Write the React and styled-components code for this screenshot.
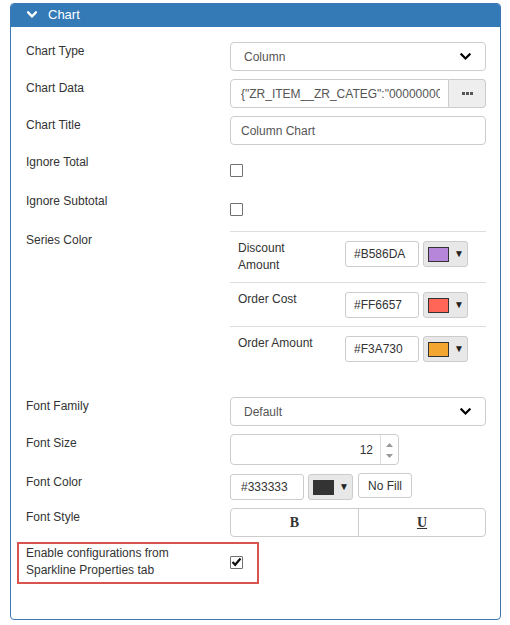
import React from 'react';
import styled, { createGlobalStyle } from 'styled-components';

const Global = createGlobalStyle`
  html, body { margin: 0; padding: 0; background: #fff; }
  body { font-family: "Liberation Sans", Arial, sans-serif; font-size: 12px; color: #333; }
  * { box-sizing: border-box; }
`;

const Page = styled.div`
  padding: 3px 9px 6px 10px;
`;

const Panel = styled.section`
  border: 1px solid #3b78b4;
  border-radius: 4px;
  overflow: hidden;
`;

const Header = styled.div`
  height: 23px;
  background: #337ab7;
  color: #fff;
  display: flex;
  align-items: center;
  gap: 11px;
  padding-left: 16px;
  padding-bottom: 2px;
  font-size: 13px;
`;

const Body = styled.div`
  padding: 15px 14px 35px 15px;
`;

const Row = styled.div`
  display: grid;
  grid-template-columns: 204px minmax(0, 1fr);
  margin-bottom: ${p => (p.$mb !== undefined ? p.$mb : 8)}px;
`;

const Label = styled.div`
  line-height: 16px;
  padding-top: 1px;
  color: #333;
`;

const Select = styled.div`
  height: 29px;
  border: 1px solid #ccc;
  border-radius: 4px;
  display: flex;
  align-items: center;
  justify-content: space-between;
  padding: 0 14px 0 13px;
  color: #555;
  background: #fff;
`;

const InputGroup = styled.div`
  display: flex;
  height: 29px;
  min-width: 0;
`;

const TextBox = styled.div`
  flex: 1;
  min-width: 0;
  height: ${p => p.$h || 29}px;
  border: 1px solid #ccc;
  border-radius: ${p => (p.$joined ? '4px 0 0 4px' : '4px')};
  display: flex;
  align-items: center;
  padding: 0 8px 0 10px;
  color: #555;
  background: #fff;
`;

const Clip = styled.div`
  flex: 1;
  min-width: 0;
  overflow: hidden;
  white-space: nowrap;
`;

const AddonButton = styled.div`
  flex: 0 0 37px;
  border: 1px solid #ccc;
  border-left: none;
  border-radius: 0 4px 4px 0;
  background: #eee;
  display: flex;
  align-items: center;
  justify-content: center;
`;

const CheckCell = styled.div`
  height: 31px;
  padding-top: 11px;
`;

const Checkbox = styled.div`
  width: 13px;
  height: 13px;
  border: 1px solid #707070;
  border-radius: 1px;
  background: #fff;
  display: flex;
  align-items: center;
  justify-content: center;
`;

const SeriesTable = styled.div`
  margin-bottom: 19px;
`;

const SeriesRow = styled.div`
  display: grid;
  grid-template-columns: 111px 74px 45px;
  column-gap: 4px;
  align-items: start;
  border-top: 1px solid #ddd;
  padding: 8px 0;
`;

const SeriesLabel = styled.div`
  padding-left: 8px;
  line-height: 17px;
  color: #333;
`;

const HexInput = styled.div`
  height: 26px;
  margin-top: 1px;
  border: 1px solid #ccc;
  border-radius: 3px;
  display: flex;
  align-items: center;
  padding-left: ${p => p.$pl || 8}px;
  color: #333;
  background: #fff;
`;

const ColorButton = styled.div`
  height: 26px;
  margin-top: 1px;
  border: 1px solid #ccc;
  border-radius: 3px;
  background: #e8e8e8;
  display: flex;
  align-items: center;
  padding-left: 4px;
  gap: 5px;
`;

const Swatch = styled.span`
  width: 21px;
  height: 15px;
  border: 1px solid #333;
  background: ${p => p.$color};
  display: block;
`;

const Caret = styled.span`
  font-size: 10px;
  color: #222;
  line-height: 1;
`;

const NumberBox = styled.div`
  width: 169px;
  height: 31px;
  border: 1px solid #ccc;
  border-radius: 4px;
  display: flex;
  background: #fff;
`;

const NumberValue = styled.div`
  flex: 1;
  display: flex;
  align-items: center;
  justify-content: flex-end;
  padding-right: 7px;
  color: #333;
`;

const Spinner = styled.div`
  width: 18px;
  border-left: 1px solid #ddd;
  display: flex;
  flex-direction: column;
  align-items: center;
  justify-content: space-between;
  padding: 8px 0 6px;
`;

const ColorLine = styled.div`
  display: grid;
  grid-template-columns: 74px 45px 55px;
  column-gap: 4px;
  align-items: start;
`;

const PlainButton = styled.div`
  height: 25px;
  margin-left: 1px;
  border: 1px solid #ccc;
  border-radius: 3px;
  background: #fff;
  display: flex;
  align-items: center;
  justify-content: center;
  color: #333;
`;

const StyleGroup = styled.div`
  display: grid;
  grid-template-columns: 1fr 1fr;
  height: 29px;
  border: 1px solid #ccc;
  border-radius: 4px;
  overflow: hidden;
`;

const StyleButton = styled.div`
  display: flex;
  align-items: center;
  justify-content: center;
  font-family: "Liberation Serif", "Times New Roman", serif;
  font-weight: bold;
  font-size: 14px;
  color: #333;
  text-decoration: ${p => (p.$underline ? 'underline' : 'none')};
  & + & { border-left: 1px solid #ccc; }
`;

const Highlight = styled.div`
  width: 242px;
  margin-left: -9px;
  border: 2px solid #d9534f;
  display: grid;
  grid-template-columns: 204px 13px;
  align-items: center;
  padding: 1px 0 3px 7px;
`;

const HighlightLabel = styled.div`
  line-height: 17px;
  color: #333;
`;

const Chevron = ({ color = '#000', w = 11, h = 7, sw = 2.4 }) => (
  <svg width={w} height={h} viewBox="0 0 12 8" style={{ display: 'block' }}>
    <polyline points="1.3,1.5 6,6.2 10.7,1.5" fill="none" stroke={color} strokeWidth={sw} strokeLinecap="square" />
  </svg>
);

const Dots = () => (
  <svg width="11" height="3" viewBox="0 0 11 3" style={{ display: 'block' }}>
    <rect x="0" y="0" width="3" height="3" fill="#555" />
    <rect x="4" y="0" width="3" height="3" fill="#555" />
    <rect x="8" y="0" width="3" height="3" fill="#555" />
  </svg>
);

const Tick = () => (
  <svg width="11" height="10" viewBox="0 0 11 10" style={{ display: 'block' }}>
    <polyline points="1.5,5 4.2,7.8 9.5,1.5" fill="none" stroke="#111" strokeWidth="2.2" />
  </svg>
);

const Tri = ({ up }) => (
  <svg width="7" height="4" viewBox="0 0 7 4" style={{ display: 'block' }}>
    <polygon points={up ? '0,4 3.5,0 7,4' : '0,0 7,0 3.5,4'} fill="#999" />
  </svg>
);

const series = [
  { name: ['Discount', 'Amount'], hex: '#B586DA', color: '#B586DA' },
  { name: ['Order Cost'], hex: '#FF6657', color: '#FF6657' },
  { name: ['Order Amount'], hex: '#F3A730', color: '#F3A730' },
];

export default function App() {
  return (
    <>
      <Global />
      <Page>
        <Panel>
          <Header>
            <Chevron color="#fff" w={10} h={7} sw={2.8} />
            <span>Chart</span>
          </Header>
          <Body>
            <Row>
              <Label>Chart Type</Label>
              <Select>
                <span>Column</span>
                <Chevron />
              </Select>
            </Row>
            <Row>
              <Label>Chart Data</Label>
              <InputGroup>
                <TextBox $joined>
                  <Clip>{'{"ZR_ITEM__ZR_CATEG":"00000000'}</Clip>
                </TextBox>
                <AddonButton>
                  <Dots />
                </AddonButton>
              </InputGroup>
            </Row>
            <Row>
              <Label>Chart Title</Label>
              <TextBox>Column Chart</TextBox>
            </Row>
            <Row>
              <Label>Ignore Total</Label>
              <CheckCell>
                <Checkbox />
              </CheckCell>
            </Row>
            <Row>
              <Label>Ignore Subtotal</Label>
              <CheckCell>
                <Checkbox />
              </CheckCell>
            </Row>
            <Row>
              <Label>Series Color</Label>
              <SeriesTable>
                {series.map(s => (
                  <SeriesRow key={s.hex}>
                    <SeriesLabel>
                      {s.name.map(n => (
                        <div key={n}>{n}</div>
                      ))}
                    </SeriesLabel>
                    <HexInput>{s.hex}</HexInput>
                    <ColorButton>
                      <Swatch $color={s.color} />
                      <Caret>▼</Caret>
                    </ColorButton>
                  </SeriesRow>
                ))}
              </SeriesTable>
            </Row>
            <Row>
              <Label>Font Family</Label>
              <Select>
                <span>Default</span>
                <Chevron />
              </Select>
            </Row>
            <Row>
              <Label>Font Size</Label>
              <NumberBox>
                <NumberValue>12</NumberValue>
                <Spinner>
                  <Tri up />
                  <Tri />
                </Spinner>
              </NumberBox>
            </Row>
            <Row>
              <Label>Font Color</Label>
              <ColorLine>
                <HexInput $pl={10}>#333333</HexInput>
                <ColorButton>
                  <Swatch $color="#333333" />
                  <Caret>▼</Caret>
                </ColorButton>
                <PlainButton>No Fill</PlainButton>
              </ColorLine>
            </Row>
            <Row $mb={5}>
              <Label>Font Style</Label>
              <StyleGroup>
                <StyleButton>B</StyleButton>
                <StyleButton $underline>U</StyleButton>
              </StyleGroup>
            </Row>
            <Highlight>
              <HighlightLabel>
                Enable configurations from
                <br />
                Sparkline Properties tab
              </HighlightLabel>
              <Checkbox>
                <Tick />
              </Checkbox>
            </Highlight>
          </Body>
        </Panel>
      </Page>
    </>
  );
}
